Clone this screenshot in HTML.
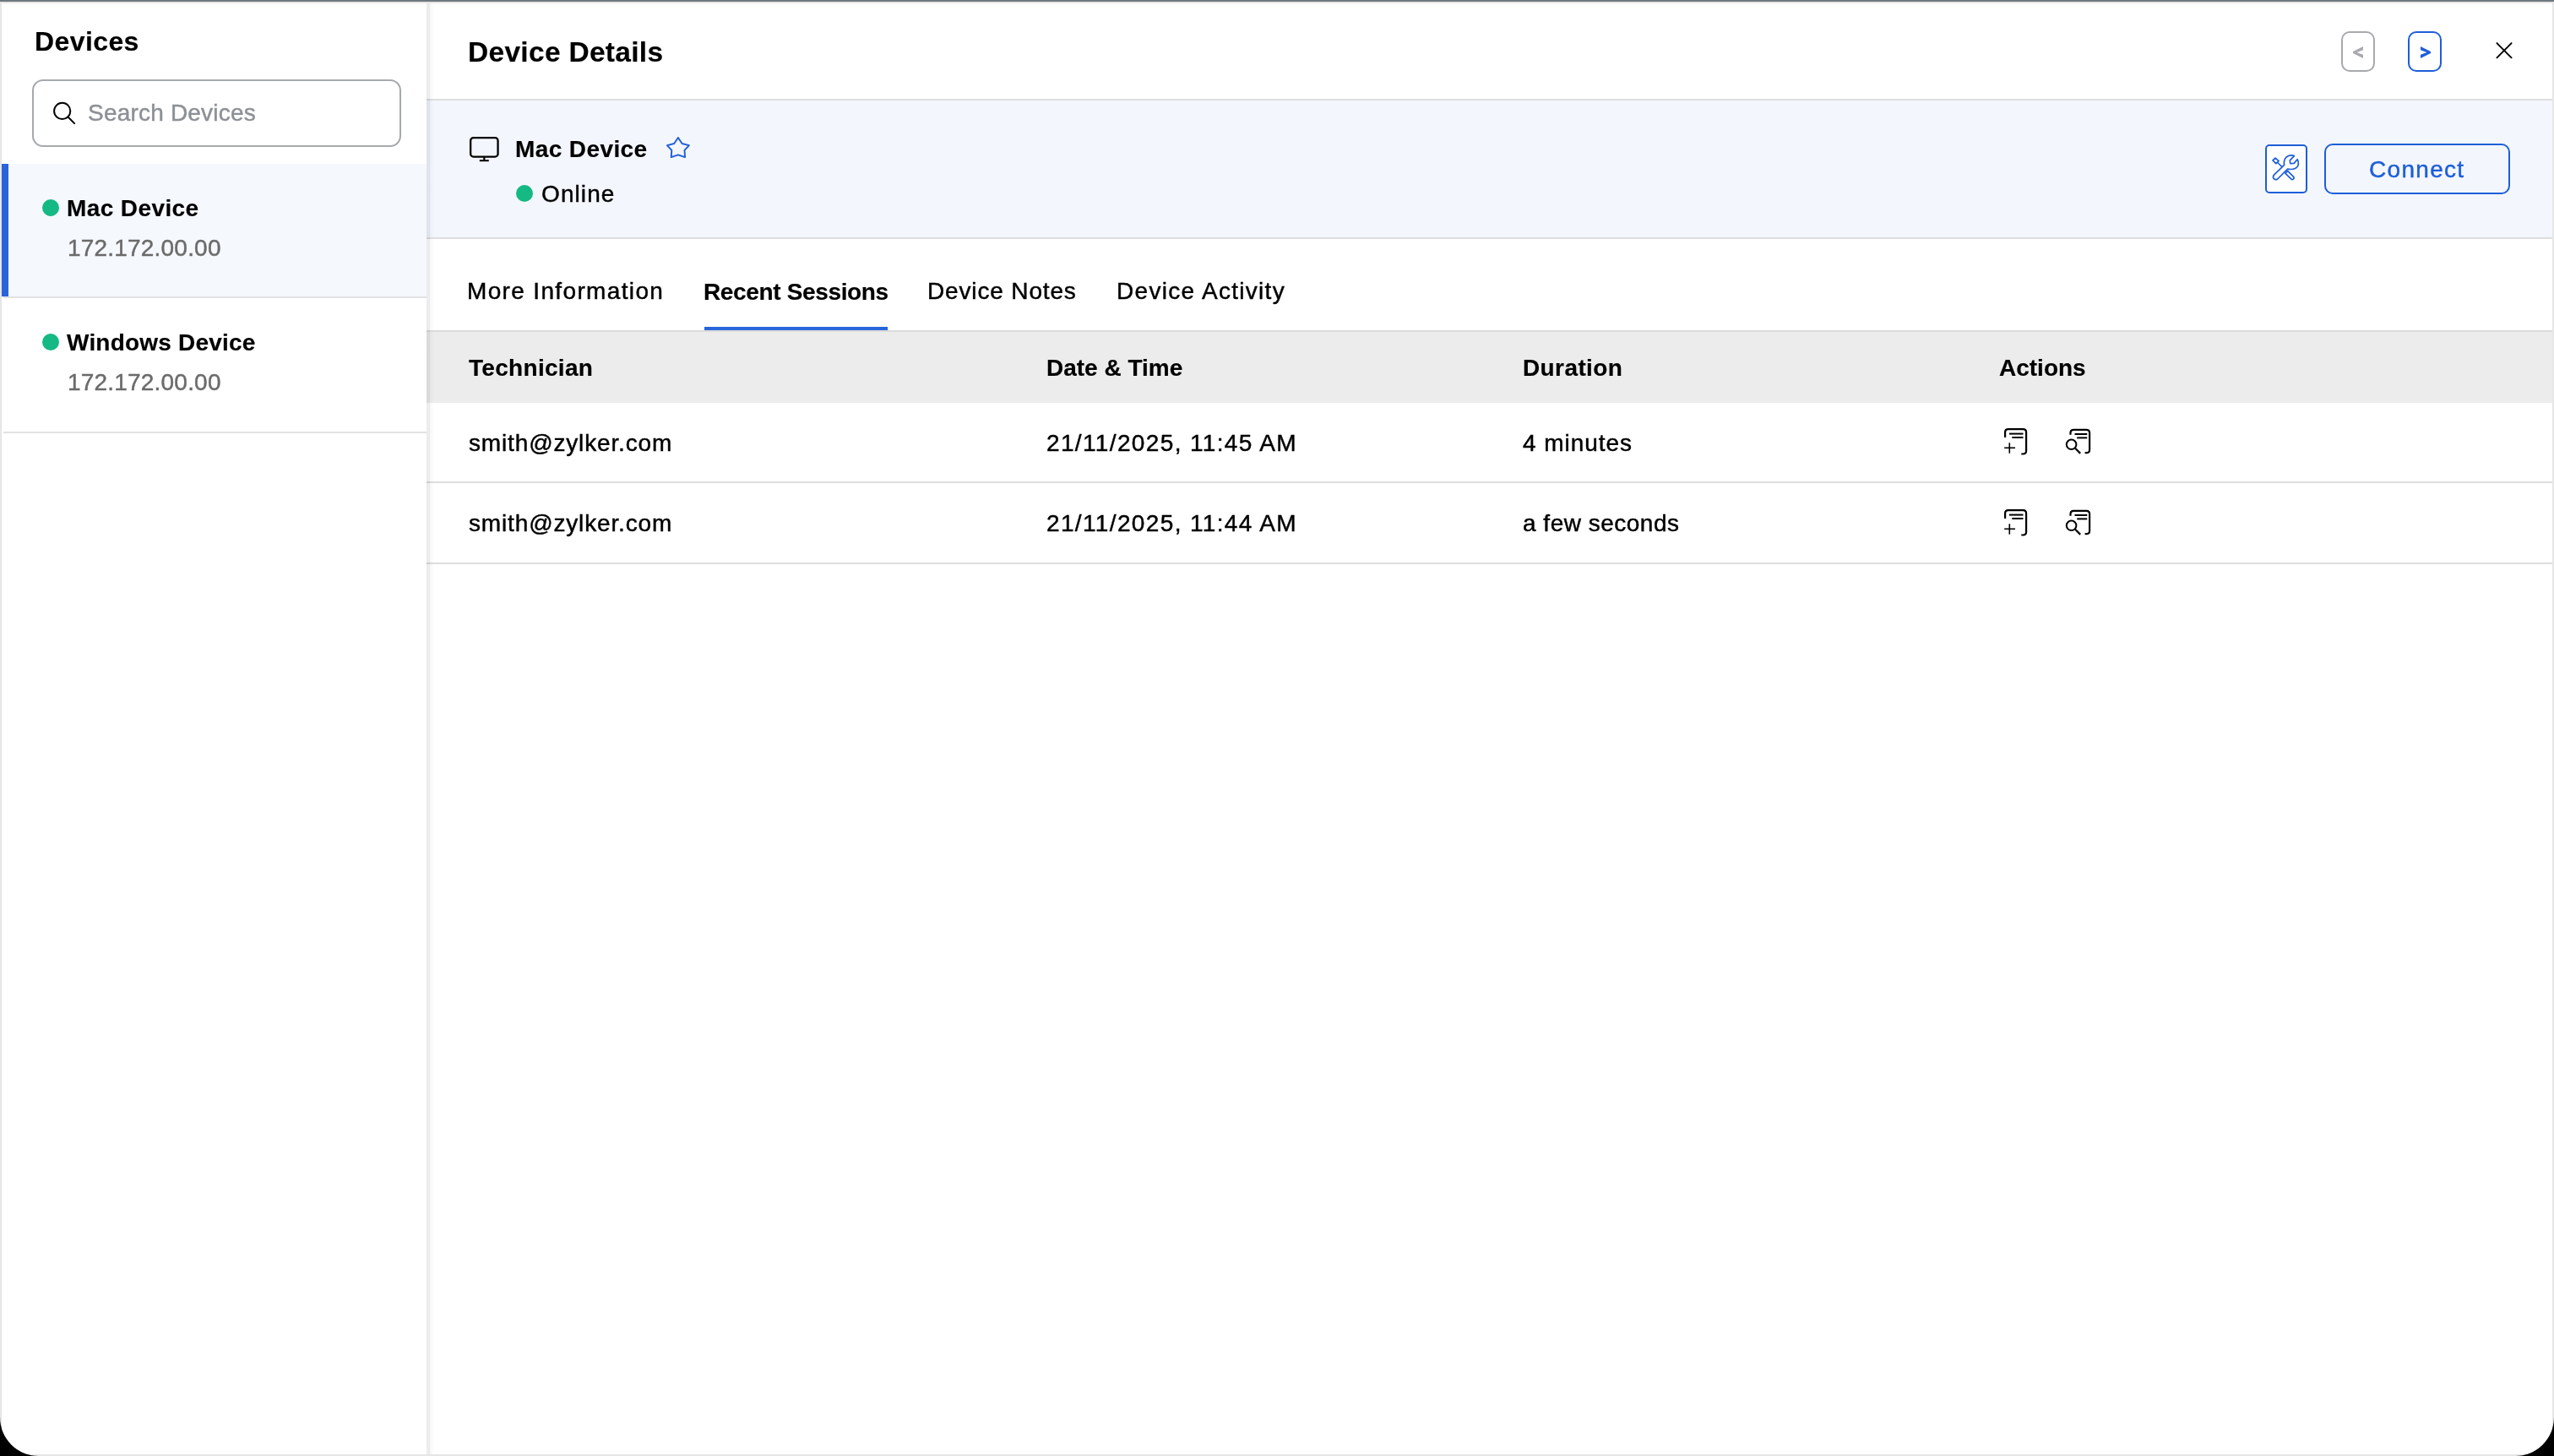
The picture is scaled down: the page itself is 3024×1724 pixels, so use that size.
<!DOCTYPE html>
<html>
<head>
<meta charset="utf-8">
<style>
html,body{margin:0;padding:0;width:3024px;height:1724px;overflow:hidden;background:#000;}
*{box-sizing:border-box;}
body{font-family:"Liberation Sans",sans-serif;color:#000;position:relative;-webkit-font-smoothing:antialiased;}
.a{position:absolute;}
.t{position:absolute;white-space:nowrap;line-height:1;font-size:28px;-webkit-text-stroke:0.45px currentColor;}
.b{-webkit-text-stroke:0.15px currentColor;}
.b{font-weight:700;}
#win{will-change:transform;position:absolute;left:0;top:0;width:3024px;height:1724px;background:#e6e6e6;border-radius:0 0 46px 46px;overflow:hidden;}
svg{position:absolute;overflow:visible;}
</style>
</head>
<body>
<div id="win">
  <div class="a" style="left:0;top:0;width:3024px;height:2px;background:#6e787e;"></div>
  <!-- sidebar -->
  <div class="a" style="left:2px;top:4px;width:503px;height:1718px;background:#fff;"></div>
  <div class="t b" style="left:41px;top:33px;font-size:32px;letter-spacing:0.4px;">Devices</div>
  <div class="a" style="left:38px;top:94px;width:437px;height:80px;border:2px solid #a6a9ad;border-radius:13px;background:#fff;"></div>
  <svg style="left:0;top:0;" width="10" height="10"><circle cx="73.7" cy="131.4" r="9.6" fill="none" stroke="#000" stroke-width="2.0"/><line x1="80.6" y1="138.5" x2="88.1" y2="146.1" stroke="#000" stroke-width="2.0" stroke-linecap="round"/></svg>
  <div class="t" style="left:104px;top:120px;color:#8c9096;letter-spacing:0.2px;">Search Devices</div>

  <div class="a" style="left:2px;top:194px;width:503px;height:157px;background:#f5f8fd;"></div>
  <div class="a" style="left:2px;top:194px;width:8px;height:157px;background:#2b63d9;"></div>
  <div class="a" style="left:4px;top:351px;width:501px;height:2px;background:#e2e2e2;"></div>
  <div class="a" style="left:50px;top:236px;width:20px;height:20px;border-radius:50%;background:#14b983;"></div>
  <div class="t b" style="left:79px;top:233px;letter-spacing:0.4px;">Mac Device</div>
  <div class="t" style="left:80px;top:280px;color:#6b6b6b;letter-spacing:0.2px;">172.172.00.00</div>

  <div class="a" style="left:50px;top:395px;width:20px;height:20px;border-radius:50%;background:#14b983;"></div>
  <div class="t b" style="left:79px;top:392px;letter-spacing:0.2px;">Windows Device</div>
  <div class="t" style="left:80px;top:439px;color:#6b6b6b;letter-spacing:0.2px;">172.172.00.00</div>
  <div class="a" style="left:4px;top:511px;width:501px;height:2px;background:#e2e2e2;"></div>

  <!-- panel -->
  <div class="a" style="left:505px;top:4px;width:2517px;height:1718px;background:#fff;"></div>
  <div class="a" style="left:505px;top:117px;width:2517px;height:2px;background:#dedede;"></div>
  <div class="t b" style="left:554px;top:45px;font-size:33.5px;letter-spacing:0.3px;">Device Details</div>

  <div class="a" style="left:2772px;top:37px;width:40px;height:48px;border:2px solid #a7a9ac;border-radius:10px;"></div>
  <svg style="left:2786px;top:55px;" width="12" height="14"><polygon points="12,0 12,4.2 4.6,7 12,9.8 12,14 0,8.1 0,5.9" fill="#a8aaad"/></svg>
  <div class="a" style="left:2851px;top:37px;width:40px;height:48px;border:2px solid #1e5ed8;border-radius:10px;"></div>
  <svg style="left:2866px;top:55px;" width="12" height="14"><polygon points="0,0 0,4.2 7.4,7 0,9.8 0,14 12,8.1 12,5.9" fill="#1e5ed8"/></svg>
  <svg style="left:2955px;top:50px;" width="20" height="20"><line x1="1.4" y1="1.1" x2="18.6" y2="18.3" stroke="#000" stroke-width="1.9" stroke-linecap="round"/><line x1="18.6" y1="1.1" x2="1.4" y2="18.3" stroke="#000" stroke-width="1.9" stroke-linecap="round"/></svg>

  <div class="a" style="left:505px;top:119px;width:2517px;height:162px;background:#f3f6fd;"></div>
  <div class="a" style="left:505px;top:281px;width:2517px;height:2px;background:#dedede;"></div>
  <svg style="left:556px;top:162px;" width="36" height="30"><rect x="1.15" y="1.15" width="32.4" height="22.4" rx="3.4" fill="none" stroke="#000" stroke-width="2.3"/><line x1="17.3" y1="24" x2="17.3" y2="28" stroke="#000" stroke-width="2.2"/><line x1="11.8" y1="28.2" x2="22.8" y2="28.2" stroke="#000" stroke-width="2"/></svg>
  <div class="t b" style="left:610px;top:163px;letter-spacing:0.4px;">Mac Device</div>
  <svg style="left:789px;top:161px;" width="29" height="28"><polygon points="13.9,1.9 18.6,9.0 26.9,11.1 21.5,16.9 22.1,25.1 13.9,22.3 5.7,25.1 6.3,16.9 0.9,11.1 9.2,9.0" fill="none" stroke="#1e5ed8" stroke-width="1.9" stroke-linejoin="round"/></svg>
  <div class="a" style="left:611px;top:219px;width:20px;height:20px;border-radius:50%;background:#14b983;"></div>
  <div class="t" style="left:641px;top:216px;letter-spacing:1.1px;">Online</div>

  <div class="a" style="left:2682px;top:171px;width:50px;height:58px;border:2px solid #1e5ed8;border-radius:5px;background:#fff;"></div>
  <svg style="left:2691px;top:183px;" width="32" height="30">
    <g fill="#fff" stroke="#1e5ed8" stroke-width="1.7" stroke-linejoin="round">
      <path d="M17.6,19.3 L24.4,26.1 Q25.8,27.7 24.4,29.0 Q23.1,30.2 21.7,28.9 L14.8,22.1 Z"/>
      <line x1="5.6" y1="9.5" x2="11.6" y2="15.2"/>
      <polygon points="3.0,4.1 7.1,7.7 3.8,10.7 0,6.9"/>
      <path d="M1.2,24.4 L13.6,12.4 Q12.2,4.6 18.4,1.6 Q22.2,0 25.4,1.6 L20.3,6.8 L20.8,10.6 L25.2,10.4 L29.1,5.7 Q31.4,9.4 29.6,13.6 Q26.6,18.6 17.6,17.2 L5.7,29.0 Q3.4,30.6 1.3,28.7 Q-0.3,26.6 1.2,24.4 Z"/>
    </g>
  </svg>
  <div class="a" style="left:2752px;top:170px;width:220px;height:60px;border:2px solid #1e5ed8;border-radius:10px;"></div>
  <div class="t" style="left:2805px;top:187px;color:#1e5ed8;letter-spacing:1.3px;">Connect</div>

  <!-- tabs -->
  <div class="t" style="left:553px;top:331px;letter-spacing:1.35px;">More Information</div>
  <div class="t b" style="left:833px;top:332px;letter-spacing:-0.35px;">Recent Sessions</div>
  <div class="t" style="left:1098px;top:331px;letter-spacing:0.85px;">Device Notes</div>
  <div class="t" style="left:1322px;top:331px;letter-spacing:1.3px;">Device Activity</div>
  <div class="a" style="left:834px;top:387px;width:217px;height:4px;background:#2765d9;"></div>

  <!-- table -->
  <div class="a" style="left:505px;top:391px;width:2517px;height:2px;background:#dcdcdc;"></div>
  <div class="a" style="left:505px;top:393px;width:2517px;height:84px;background:#ececec;"></div>
  <div class="t b" style="left:555px;top:422px;letter-spacing:0.3px;">Technician</div>
  <div class="t b" style="left:1239px;top:422px;">Date &amp; Time</div>
  <div class="t b" style="left:1803px;top:422px;letter-spacing:0.4px;">Duration</div>
  <div class="t b" style="left:2367px;top:422px;">Actions</div>

  <div class="a" style="left:505px;top:570px;width:2517px;height:2px;background:#dedede;"></div>
  <div class="a" style="left:505px;top:666px;width:2517px;height:2px;background:#dedede;"></div>

  <div class="t" style="left:555px;top:511px;letter-spacing:0.85px;">smith@zylker.com</div>
  <div class="t" style="left:1239px;top:511px;letter-spacing:1.36px;">21/11/2025, 11:45 AM</div>
  <div class="t" style="left:1803px;top:511px;letter-spacing:0.95px;">4 minutes</div>

  <div class="t" style="left:555px;top:606px;letter-spacing:0.85px;">smith@zylker.com</div>
  <div class="t" style="left:1239px;top:606px;letter-spacing:1.36px;">21/11/2025, 11:44 AM</div>
  <div class="t" style="left:1803px;top:606px;letter-spacing:0.5px;">a few seconds</div>

  <svg id="ic1" style="left:2372px;top:506px;" width="30" height="34">
    <g fill="none" stroke="#000" stroke-width="2.2" stroke-linecap="butt">
      <path d="M2.1,12 V5.8 Q2.1,2.1 5.8,2.1 H23.4 Q27.1,2.1 27.1,5.8 V27.8 Q27.1,31.5 23.4,31.5 H21.3"/>
      <line x1="7" y1="7.6" x2="23.5" y2="7.6" stroke-width="2"/>
      <line x1="10.3" y1="12" x2="23.5" y2="12" stroke-width="2"/>
      <line x1="1.2" y1="24.3" x2="14" y2="24.3" stroke-width="1.6"/>
      <line x1="7.3" y1="18.3" x2="7.3" y2="30.7" stroke-width="1.6"/>
    </g>
  </svg>
  <svg id="ic2" style="left:2449px;top:506px;" width="30" height="34">
    <g fill="none" stroke="#000" stroke-width="2.2">
      <path d="M2.5,8.7 V6.6 Q2.5,2.9 6.2,2.9 H21.4 Q25.1,2.9 25.1,6.6 V26.5 Q25.1,30.2 21.4,30.2 H19.6"/>
      <line x1="7.5" y1="8" x2="22.3" y2="8" stroke-width="2"/>
      <line x1="10.2" y1="12.4" x2="22.3" y2="12.4" stroke-width="2"/>
      <circle cx="3.6" cy="20.3" r="5.8" stroke-width="2"/>
      <line x1="8.1" y1="24.8" x2="14.2" y2="30.9" stroke-width="2.2"/>
    </g>
  </svg>
  <svg style="left:2372px;top:602px;" width="30" height="34">
    <g fill="none" stroke="#000" stroke-width="2.2" stroke-linecap="butt">
      <path d="M2.1,12 V5.8 Q2.1,2.1 5.8,2.1 H23.4 Q27.1,2.1 27.1,5.8 V27.8 Q27.1,31.5 23.4,31.5 H21.3"/>
      <line x1="7" y1="7.6" x2="23.5" y2="7.6" stroke-width="2"/>
      <line x1="10.3" y1="12" x2="23.5" y2="12" stroke-width="2"/>
      <line x1="1.2" y1="24.3" x2="14" y2="24.3" stroke-width="1.6"/>
      <line x1="7.3" y1="18.3" x2="7.3" y2="30.7" stroke-width="1.6"/>
    </g>
  </svg>
  <svg style="left:2449px;top:602px;" width="30" height="34">
    <g fill="none" stroke="#000" stroke-width="2.2">
      <path d="M2.5,8.7 V6.6 Q2.5,2.9 6.2,2.9 H21.4 Q25.1,2.9 25.1,6.6 V26.5 Q25.1,30.2 21.4,30.2 H19.6"/>
      <line x1="7.5" y1="8" x2="22.3" y2="8" stroke-width="2"/>
      <line x1="10.2" y1="12.4" x2="22.3" y2="12.4" stroke-width="2"/>
      <circle cx="3.6" cy="20.3" r="5.8" stroke-width="2"/>
      <line x1="8.1" y1="24.8" x2="14.2" y2="30.9" stroke-width="2.2"/>
    </g>
  </svg>

  <!-- left shadow of panel -->
  <div class="a" style="left:505px;top:4px;width:4px;height:1718px;background:rgba(0,0,0,0.075);"></div>
  <div class="a" style="left:509px;top:4px;width:5px;height:1718px;background:linear-gradient(to right,rgba(30,60,120,0.045),rgba(30,60,120,0));"></div>
</div>
</body>
</html>
